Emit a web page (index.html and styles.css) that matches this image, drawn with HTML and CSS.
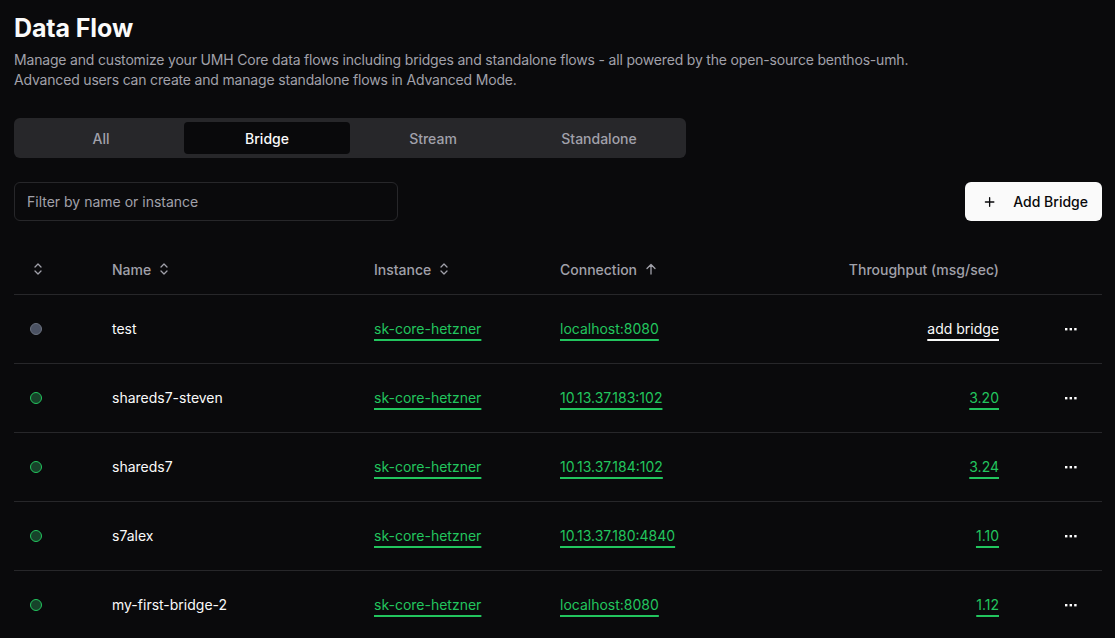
FILE: index.html
```html
<!DOCTYPE html>
<html lang="en">
<head>
<meta charset="utf-8">
<title>Data Flow</title>
<link rel="stylesheet" href="styles.css">
</head>
<body>
<main class="page">
  <h1 class="title">Data Flow</h1>
  <p class="desc">Manage and customize your UMH Core data flows including bridges and standalone flows - all powered by the open-source benthos-umh.<br>Advanced users can create and manage standalone flows in Advanced Mode.</p>

  <div class="tabs">
    <div class="tab">All</div>
    <div class="tab active">Bridge</div>
    <div class="tab">Stream</div>
    <div class="tab">Standalone</div>
  </div>

  <div class="toolbar">
    <div class="filter">Filter by name or instance</div>
    <button class="add-btn">
      <svg width="12" height="12" viewBox="0 0 12 12"><path d="M6 1.5v9M1.5 6h9" stroke="#09090b" stroke-width="1.4" stroke-linecap="round"/></svg>
      <span>Add Bridge</span>
    </button>
  </div>

  <table class="grid">
    <colgroup>
      <col class="c-status"><col class="c-name"><col class="c-inst"><col class="c-conn"><col class="c-tp"><col class="c-act">
    </colgroup>
    <thead>
      <tr>
        <th class="status"><svg class="sort" width="10" height="14" viewBox="0 0 10 14"><path d="M2 5l3-3 3 3M2 9l3 3 3-3" fill="none" stroke="#a1a1aa" stroke-width="1.3" stroke-linecap="round" stroke-linejoin="round"/></svg></th>
        <th><span class="hd">Name <svg class="sort" width="10" height="14" viewBox="0 0 10 14"><path d="M2 5l3-3 3 3M2 9l3 3 3-3" fill="none" stroke="#a1a1aa" stroke-width="1.3" stroke-linecap="round" stroke-linejoin="round"/></svg></span></th>
        <th><span class="hd">Instance <svg class="sort" width="10" height="14" viewBox="0 0 10 14"><path d="M2 5l3-3 3 3M2 9l3 3 3-3" fill="none" stroke="#a1a1aa" stroke-width="1.3" stroke-linecap="round" stroke-linejoin="round"/></svg></span></th>
        <th><span class="hd">Connection <svg class="sort" width="12" height="14" viewBox="0 0 12 14"><path d="M6 12V2.5M2 6.5l4-4 4 4" fill="none" stroke="#a1a1aa" stroke-width="1.3" stroke-linecap="round" stroke-linejoin="round"/></svg></span></th>
        <th class="tp">Throughput (msg/sec)</th>
        <th></th>
      </tr>
    </thead>
    <tbody>
      <tr>
        <td class="status"><span class="dot idle"></span></td>
        <td>test</td>
        <td><a class="lnk">sk-core-hetzner</a></td>
        <td><a class="lnk">localhost:8080</a></td>
        <td class="tp"><a class="lnk white">add bridge</a></td>
        <td class="act"><svg width="12" height="4" viewBox="0 0 12 4"><rect x="0" y="1" width="2.4" height="2.4" fill="#fff"/><rect x="4.6" y="1" width="2.4" height="2.4" fill="#fff"/><rect x="9.2" y="1" width="2.4" height="2.4" fill="#fff"/></svg></td>
      </tr>
      <tr>
        <td class="status"><span class="dot ok"></span></td>
        <td>shareds7-steven</td>
        <td><a class="lnk">sk-core-hetzner</a></td>
        <td><a class="lnk">10.13.37.183:102</a></td>
        <td class="tp"><a class="lnk">3.20</a></td>
        <td class="act"><svg width="12" height="4" viewBox="0 0 12 4"><rect x="0" y="1" width="2.4" height="2.4" fill="#fff"/><rect x="4.6" y="1" width="2.4" height="2.4" fill="#fff"/><rect x="9.2" y="1" width="2.4" height="2.4" fill="#fff"/></svg></td>
      </tr>
      <tr>
        <td class="status"><span class="dot ok"></span></td>
        <td>shareds7</td>
        <td><a class="lnk">sk-core-hetzner</a></td>
        <td><a class="lnk">10.13.37.184:102</a></td>
        <td class="tp"><a class="lnk">3.24</a></td>
        <td class="act"><svg width="12" height="4" viewBox="0 0 12 4"><rect x="0" y="1" width="2.4" height="2.4" fill="#fff"/><rect x="4.6" y="1" width="2.4" height="2.4" fill="#fff"/><rect x="9.2" y="1" width="2.4" height="2.4" fill="#fff"/></svg></td>
      </tr>
      <tr>
        <td class="status"><span class="dot ok"></span></td>
        <td>s7alex</td>
        <td><a class="lnk">sk-core-hetzner</a></td>
        <td><a class="lnk">10.13.37.180:4840</a></td>
        <td class="tp"><a class="lnk">1.10</a></td>
        <td class="act"><svg width="12" height="4" viewBox="0 0 12 4"><rect x="0" y="1" width="2.4" height="2.4" fill="#fff"/><rect x="4.6" y="1" width="2.4" height="2.4" fill="#fff"/><rect x="9.2" y="1" width="2.4" height="2.4" fill="#fff"/></svg></td>
      </tr>
      <tr>
        <td class="status"><span class="dot ok"></span></td>
        <td>my-first-bridge-2</td>
        <td><a class="lnk">sk-core-hetzner</a></td>
        <td><a class="lnk">localhost:8080</a></td>
        <td class="tp"><a class="lnk">1.12</a></td>
        <td class="act"><svg width="12" height="4" viewBox="0 0 12 4"><rect x="0" y="1" width="2.4" height="2.4" fill="#fff"/><rect x="4.6" y="1" width="2.4" height="2.4" fill="#fff"/><rect x="9.2" y="1" width="2.4" height="2.4" fill="#fff"/></svg></td>
      </tr>
    </tbody>
  </table>
</main>
</body>
</html>
```

FILE: styles.css
```css
* { box-sizing: border-box; }
html, body {
  margin: 0;
  background: #0a0a0c;
  color: #fafafa;
  font-family: Inter, "Noto Sans", "Liberation Sans", sans-serif;
  overflow: hidden;
}
.page {
  padding: 12px 13px 0 14px;
}
.title {
  margin: 0;
  font-size: 25px;
  line-height: 32px;
  font-weight: 700;
  letter-spacing: -0.1px;
}
.desc {
  margin: 6px 0 0;
  font-size: 14px;
  line-height: 20px;
  color: #a1a1aa;
  letter-spacing: -0.18px;
}
.tabs {
  margin-top: 28px;
  width: 672px;
  height: 40px;
  padding: 4px;
  background: #27272a;
  border-radius: 6px;
  display: grid;
  grid-template-columns: repeat(4, 1fr);
}
.tab {
  display: flex;
  align-items: center;
  justify-content: center;
  font-size: 14px;
  font-weight: 500;
  color: #a1a1aa;
  border-radius: 4px;
}
.tab.active {
  background: #09090b;
  color: #fafafa;
}
.toolbar {
  margin-top: 24px;
  display: flex;
  justify-content: space-between;
  align-items: center;
}
.filter {
  width: 384px;
  height: 39px;
  border: 1px solid #27272a;
  border-radius: 6px;
  padding: 0 12px;
  display: flex;
  align-items: center;
  font-size: 14px;
  color: #a1a1aa;
}
.add-btn {
  height: 39px;
  width: 137px;
  border: none;
  border-radius: 6px;
  background: #fafafa;
  color: #09090b;
  font-family: inherit;
  font-size: 14px;
  font-weight: 500;
  white-space: nowrap;
  display: flex;
  align-items: center;
  gap: 18px;
  padding: 0 14px 0 19px;
}
.grid {
  margin-top: 24px;
  width: 1088px;
  border-collapse: collapse;
  table-layout: fixed;
  font-size: 14px;
}
.c-status { width: 84px; }
.c-name { width: 262px; }
.c-inst { width: 186px; }
.c-conn { width: 200px; }
.c-tp { width: 267px; }
.c-act { width: 89px; }
th {
  height: 49px;
  text-align: left;
  font-weight: 500;
  color: #a1a1aa;
  padding: 0 14px;
  border-bottom: 1px solid #27272a;
}
td {
  height: 69px;
  padding: 0 14px;
  border-bottom: 1px solid #27272a;
  color: #fafafa;
  font-weight: 400;
}
tbody tr:last-child td { border-bottom: none; }
.status { padding-left: 16px; }
th.status { padding-left: 19px; }
.hd {
  display: inline-flex;
  align-items: center;
  gap: 8px;
}
.sort { display: block; }
.tp { text-align: right; }
.act { padding-left: 52px; }
.act svg { display: block; }
.dot {
  display: block;
  width: 12px;
  height: 12px;
  border-radius: 50%;
}
.dot.idle {
  background: #4b5263;
  border: 1px solid #6b7280;
}
.dot.ok {
  background: #17432a;
  border: 1.5px solid #22c55e;
}
.lnk {
  color: #22c55e;
  font-weight: 400;
  text-decoration: underline;
  text-decoration-thickness: 1.5px;
  text-underline-offset: 5px;
}
.lnk.white {
  color: #fafafa;
}
```
